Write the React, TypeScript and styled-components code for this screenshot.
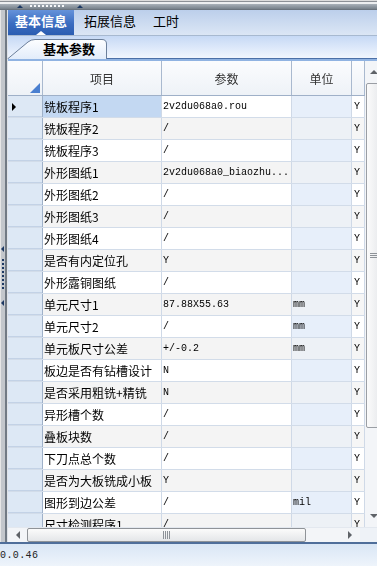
import React from "react";
import styled, { createGlobalStyle } from "styled-components";

const cjk = `"Noto Sans CJK SC", "Noto Sans", sans-serif`;
const mono = `"Liberation Mono", "Noto Sans CJK SC", monospace`;
const cols = "35px 119px 130px 60px 13px";

const GlobalStyle = createGlobalStyle`
  html, body {
    margin: 0;
    padding: 0;
  }
  body {
    width: 377px;
    height: 566px;
    overflow: hidden;
    background: #fff;
    font-family: ${cjk};
    font-size: 12px;
    color: #000;
    -webkit-font-smoothing: antialiased;
  }
`;

const Window = styled.div`
  width: 377px;
  height: 566px;
  display: flex;
  flex-direction: column;
  overflow: hidden;
`;

const TopSplitter = styled.div`
  height: 10px;
  flex: none;
  display: flex;
  align-items: center;
  padding-top: 2px;
  box-sizing: border-box;
  background: linear-gradient(
    to bottom,
    #dcdcdc 0,
    #dcdcdc 1px,
    #8c9096 1px,
    #8c9096 2px,
    #eceef0 2px,
    #eceef0 4px,
    #a9b1b9 4px,
    #76808a 9px,
    #5f6872 10px
  );
`;

const UpMarker = styled.span<{ $left: number }>`
  width: 0;
  height: 0;
  margin-left: ${p => p.$left}px;
  border-left: 3px solid transparent;
  border-right: 3px solid transparent;
  border-bottom: 3px solid #1d3963;
`;

const HGrip = styled.span`
  width: 34px;
  height: 2px;
  margin-left: 7px;
  background: repeating-linear-gradient(to right, #f4f6f8 0 2px, transparent 2px 4px);
`;

const Body = styled.div`
  flex: 1;
  display: flex;
  min-height: 0;
`;

const LeftSplitter = styled.div`
  width: 8px;
  flex: none;
  display: flex;
  flex-direction: column;
  align-items: center;
  justify-content: center;
  background: linear-gradient(
    to right,
    #e6e6e6 0,
    #e6e6e6 1px,
    #c3c7cc 1px,
    #c3c7cc 5px,
    #717a84 5px,
    #717a84 7px,
    #dfe3e8 7px
  );
`;

const LeftMarker = styled.span`
  width: 0;
  height: 0;
  margin-left: -3px;
  border-top: 3px solid transparent;
  border-bottom: 3px solid transparent;
  border-right: 3px solid #1d3963;
`;

const VGrip = styled.span`
  width: 2px;
  height: 32px;
  margin: 7px 0 9px -3px;
  background: repeating-linear-gradient(to bottom, #1d3963 0 2px, transparent 2px 4px);
`;

const Panel = styled.div`
  flex: 1;
  min-width: 0;
  display: flex;
  flex-direction: column;
`;

const TabStrip = styled.div`
  height: 26px;
  flex: none;
  box-sizing: border-box;
  display: flex;
  gap: 3px;
  background: linear-gradient(#bccfeb, #dbe6f5);
  border-bottom: 1px solid #a7b9d0;
`;

const Tab = styled.div<{ $active?: boolean }>`
  display: flex;
  flex-direction: column;
  align-items: center;
  justify-content: flex-end;
  padding: 0 7px;
  font-size: 13px;
  font-weight: ${p => (p.$active ? 700 : 400)};
  color: ${p => (p.$active ? "#fff" : "#000")};
  background: ${p =>
    p.$active ? "linear-gradient(#6592da, #3a6cc0 55%, #2b5db1)" : "transparent"};
`;

const TabLabel = styled.span`
  line-height: 21px;
`;

const TabCaret = styled.span<{ $show?: boolean }>`
  width: 0;
  height: 0;
  border-left: 5px solid transparent;
  border-right: 5px solid transparent;
  border-bottom: 4px solid ${p => (p.$show ? "#fff" : "transparent")};
`;

const SubTabBar = styled.div`
  height: 23px;
  flex: none;
  box-sizing: border-box;
  display: flex;
  align-items: flex-end;
  background: linear-gradient(#c6d9f5, #f1f6fe);
  border-bottom: 1px solid #4c70a7;
`;

const SubTab = styled.div`
  position: relative;
  width: 100px;
  height: 20px;
  margin-left: -1px;
  margin-bottom: -1px;
`;

const SubTabShape = styled.svg`
  position: absolute;
  inset: 0;
`;

const SubTabLabel = styled.span`
  position: relative;
  display: block;
  padding-left: 36px;
  line-height: 20px;
  font-size: 13px;
  font-weight: 700;
`;

const GridWrap = styled.div`
  flex: 1;
  min-height: 0;
  display: flex;
  flex-direction: column;
  border-top: 2px solid #90b3e2;
`;

const GridMain = styled.div`
  flex: 1;
  min-height: 0;
  display: flex;
`;

const Table = styled.div`
  width: 357px;
  flex: none;
  overflow: hidden;
  display: flex;
  flex-direction: column;
  will-change: transform;
`;

const HeaderRow = styled.div`
  display: grid;
  grid-template-columns: ${cols};
  height: 35px;
  flex: none;
  box-sizing: border-box;
  border-bottom: 1px solid #9fb0c8;
  background: linear-gradient(#fbfcfe, #eef2f7);
`;

const HeaderCell = styled.div`
  display: flex;
  align-items: center;
  justify-content: center;
  border-right: 1px solid #a9b9cf;
  color: #333;
  font-size: 12px;
`;

const CornerCell = styled.div`
  display: flex;
  align-items: flex-end;
  justify-content: flex-end;
  padding: 0 2px 2px 0;
  border-right: 1px solid #a9b9cf;
`;

const CornerMark = styled.span`
  width: 10px;
  height: 10px;
  background: #4a7fd0;
  clip-path: polygon(100% 0, 100% 100%, 0 100%);
`;

const Row = styled.div`
  display: grid;
  grid-template-columns: ${cols};
  height: 22px;
  flex: none;
  box-sizing: border-box;
  border-bottom: 1px solid #d2dce9;
`;

const RowHead = styled.div`
  display: flex;
  align-items: center;
  padding-left: 4px;
  background: #dde8f5;
  border-right: 1px solid #9fb1c9;
  box-shadow: inset 0 -1px 0 #c3d2e6;
`;

const RowPointer = styled.span`
  width: 0;
  height: 0;
  border-top: 4px solid transparent;
  border-bottom: 4px solid transparent;
  border-left: 4px solid #000;
`;

const Cell = styled.div<{ $bg: string; $mono?: boolean; $pad?: number }>`
  display: flex;
  align-items: center;
  overflow: hidden;
  white-space: nowrap;
  padding-left: ${p => p.$pad ?? 1}px;
  background: ${p => p.$bg};
  border-right: 1px solid #cfd9e7;
  color: #000;
  font-family: ${p => (p.$mono ? mono : cjk)};
  font-size: ${p => (p.$mono ? "10px" : "12px")};
`;

const VScroll = styled.div`
  width: 17px;
  flex: none;
  display: flex;
  flex-direction: column;
  background: #f3f5f8;
`;

const ScrollButton = styled.div<{ $h: number }>`
  height: ${p => p.$h}px;
  flex: none;
  display: flex;
  align-items: center;
  justify-content: center;
`;

const Arrow = styled.span<{ $dir: "up" | "down" | "left" | "right" }>`
  width: 0;
  height: 0;
  ${p =>
    p.$dir === "up"
      ? "border-left: 4px solid transparent; border-right: 4px solid transparent; border-bottom: 4px solid #5f6368;"
      : p.$dir === "down"
      ? "border-left: 4px solid transparent; border-right: 4px solid transparent; border-top: 4px solid #5f6368;"
      : p.$dir === "left"
      ? "border-top: 4px solid transparent; border-bottom: 4px solid transparent; border-right: 4px solid #5f6368;"
      : "border-top: 4px solid transparent; border-bottom: 4px solid transparent; border-left: 4px solid #5f6368;"}
`;

const VThumb = styled.div`
  height: 345px;
  flex: none;
  margin-left: 1px;
  box-sizing: border-box;
  display: flex;
  align-items: center;
  justify-content: center;
  border: 1px solid #9a9ea4;
  border-radius: 2px;
  background: linear-gradient(to right, #fbfbfb, #e6e8eb);
`;

const VGripLines = styled.span`
  width: 8px;
  height: 5px;
  background: repeating-linear-gradient(to bottom, #8d9298 0 1px, transparent 1px 2px);
`;

const Track = styled.div`
  flex: 1;
`;

const HScroll = styled.div`
  height: 15px;
  flex: none;
  display: flex;
  background: #f3f5f8;
  border-top: 1px solid #e3e8ef;
  box-sizing: border-box;
`;

const HButton = styled.div<{ $w: number }>`
  width: ${p => p.$w}px;
  flex: none;
  display: flex;
  align-items: center;
  justify-content: center;
`;

const HThumb = styled.div`
  width: 279px;
  flex: none;
  box-sizing: border-box;
  display: flex;
  align-items: center;
  justify-content: center;
  border: 1px solid #8f9398;
  border-radius: 2px;
  background: linear-gradient(#fbfbfb, #e4e6e9);
`;

const HGripLines = styled.span`
  width: 7px;
  height: 8px;
  background: repeating-linear-gradient(to right, #8d9298 0 1px, transparent 1px 2px);
`;

const Corner = styled.div`
  width: 17px;
  flex: none;
  background: #eef2f7;
`;

const StatusBar = styled.div`
  height: 24px;
  flex: none;
  box-sizing: border-box;
  display: flex;
  align-items: center;
  border-top: 2px solid #4f6e9a;
  background: linear-gradient(#d9e6f5, #eef4fb);
  font-family: ${mono};
  font-size: 10px;
  letter-spacing: 0.4px;
  color: #222;
`;

const rows = [
  { name: "铣板程序1", value: "2v2du068a0.rou", unit: "" },
  { name: "铣板程序2", value: "/", unit: "" },
  { name: "铣板程序3", value: "/", unit: "" },
  { name: "外形图纸1", value: "2v2du068a0_biaozhu...", unit: "" },
  { name: "外形图纸2", value: "/", unit: "" },
  { name: "外形图纸3", value: "/", unit: "" },
  { name: "外形图纸4", value: "/", unit: "" },
  { name: "是否有内定位孔", value: "Y", unit: "" },
  { name: "外形露铜图纸", value: "/", unit: "" },
  { name: "单元尺寸1", value: "87.88X55.63", unit: "mm" },
  { name: "单元尺寸2", value: "/", unit: "mm" },
  { name: "单元板尺寸公差", value: "+/-0.2", unit: "mm" },
  { name: "板边是否有钻槽设计", value: "N", unit: "" },
  { name: "是否采用粗铣+精铣", value: "N", unit: "" },
  { name: "异形槽个数", value: "/", unit: "" },
  { name: "叠板块数", value: "/", unit: "" },
  { name: "下刀点总个数", value: "/", unit: "" },
  { name: "是否为大板铣成小板", value: "Y", unit: "" },
  { name: "图形到边公差", value: "/", unit: "mil" },
  { name: "尺寸检测程序1", value: "/", unit: "" }
];

const App = () => {
  return (
    <>
      <GlobalStyle />
      <Window>
        <TopSplitter>
          <UpMarker $left={17} />
          <HGrip />
          <UpMarker $left={13} />
        </TopSplitter>
        <Body>
          <LeftSplitter>
            <LeftMarker />
            <VGrip />
            <LeftMarker />
          </LeftSplitter>
          <Panel>
            <TabStrip>
              <Tab $active>
                <TabLabel>基本信息</TabLabel>
                <TabCaret $show />
              </Tab>
              <Tab>
                <TabLabel>拓展信息</TabLabel>
                <TabCaret />
              </Tab>
              <Tab>
                <TabLabel>工时</TabLabel>
                <TabCaret />
              </Tab>
            </TabStrip>
            <SubTabBar>
              <SubTab>
                <SubTabShape width="100" height="20" viewBox="0 0 100 20">
                  <defs>
                    <linearGradient id="subtab" x1="0" y1="0" x2="0" y2="1">
                      <stop offset="0" stopColor="#fdfeff" />
                      <stop offset="1" stopColor="#e2ecfa" />
                    </linearGradient>
                  </defs>
                  <path
                    d="M0.5 20 L21 3 Q24 0.5 28 0.5 L95 0.5 Q99.5 0.5 99.5 5 L99.5 20"
                    fill="url(#subtab)"
                    stroke="#6b7f9b"
                    strokeWidth="1"
                  />
                </SubTabShape>
                <SubTabLabel>基本参数</SubTabLabel>
              </SubTab>
            </SubTabBar>
            <GridWrap>
              <GridMain>
                <Table>
                  <HeaderRow>
                    <CornerCell>
                      <CornerMark />
                    </CornerCell>
                    <HeaderCell>项目</HeaderCell>
                    <HeaderCell>参数</HeaderCell>
                    <HeaderCell>单位</HeaderCell>
                    <HeaderCell />
                  </HeaderRow>
                  {rows.map((row, i) => {
                    const alt = i % 2 === 1;
                    return (
                      <Row key={row.name}>
                        <RowHead>{i === 0 && <RowPointer />}</RowHead>
                        <Cell $bg={i === 0 ? "#c3d8f2" : alt ? "#f4f4f4" : "#fff"}>
                          {row.name}
                        </Cell>
                        <Cell $bg={alt ? "#f4f4f4" : "#fff"} $mono>
                          {row.value}
                        </Cell>
                        <Cell $bg={alt ? "#edf1f6" : "#e7effa"} $mono>
                          {row.unit}
                        </Cell>
                        <Cell $bg={alt ? "#f6f6f6" : "#fff"} $mono $pad={2}>
                          Y
                        </Cell>
                      </Row>
                    );
                  })}
                </Table>
                <VScroll>
                  <ScrollButton $h={22}>
                    <Arrow $dir="up" />
                  </ScrollButton>
                  <VThumb>
                    <VGripLines />
                  </VThumb>
                  <Track />
                  <ScrollButton $h={22}>
                    <Arrow $dir="down" />
                  </ScrollButton>
                </VScroll>
              </GridMain>
              <HScroll>
                <HButton $w={19}>
                  <Arrow $dir="left" />
                </HButton>
                <HThumb>
                  <HGripLines />
                </HThumb>
                <Track />
                <HButton $w={20}>
                  <Arrow $dir="right" />
                </HButton>
                <Corner />
              </HScroll>
            </GridWrap>
          </Panel>
        </Body>
        <StatusBar>0.0.46</StatusBar>
      </Window>
    </>
  );
};

export default App;
